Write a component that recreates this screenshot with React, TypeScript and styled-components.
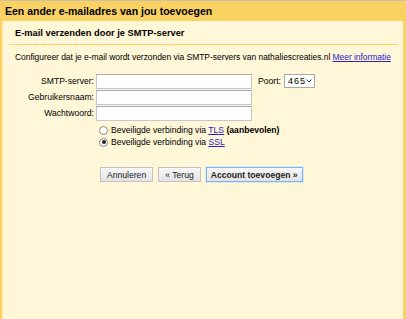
import { createGlobalStyle, styled } from "styled-components";

const GlobalStyle = createGlobalStyle`
  html, body {
    margin: 0;
    padding: 0;
    background: #fff7d7;
  }
  body {
    font-family: "Liberation Sans", Arial, sans-serif;
    color: #000;
  }
`;

const Frame = styled.div`
  width: 406px;
  height: 319px;
  box-sizing: border-box;
  border-top: 1px solid #c9c2a8;
  display: flex;
  flex-direction: column;
  background: #fad163;
`;

const Header = styled.div`
  height: 20px;
  padding-left: 5px;
  display: flex;
  align-items: center;
  font-size: 10.5px;
  font-weight: bold;
`;

const Body = styled.div`
  flex: 1;
  margin: 0 3px 0 2px;
  background: #fff7d7;
  border-left: 1px solid #fde9a8;
  padding: 7px 5px 0 6px;
`;

const SubTitle = styled.div`
  font-size: 9.3px;
  font-weight: bold;
  padding: 0 0 6px 6px;
  border-bottom: 1px solid #fad163;
`;

const Intro = styled.p`
  margin: 7px 0 0 6px;
  font-size: 8.5px;
  letter-spacing: -0.05px;
  white-space: nowrap;
`;

const Link = styled.a`
  color: #2a22c8;
  text-decoration: underline;
`;

const Form = styled.div`
  margin-top: 11px;
  display: grid;
  grid-template-columns: 85px 156px auto;
  grid-auto-rows: 16px;
  column-gap: 2px;
  align-items: center;
  font-size: 8.6px;
`;

const Label = styled.label`
  text-align: right;
`;

const TextInput = styled.input`
  box-sizing: border-box;
  width: 156px;
  height: 15px;
  border: 1px solid #c6c6c6;
  border-top-color: #a9a9a9;
  background: #fff;
  padding: 0 2px;
`;

const PortCell = styled.div`
  display: flex;
  align-items: center;
  gap: 3px;
  padding-left: 4px;
`;

const PortSelect = styled.div`
  box-sizing: border-box;
  width: 31px;
  height: 14px;
  border: 1px solid #a9a9a9;
  background: #fff;
  display: flex;
  align-items: center;
  justify-content: space-between;
  padding: 0 2px 0 3px;
  font-size: 9px;
  letter-spacing: 1px;
`;

const Options = styled.div`
  margin: 4px 0 0 90px;
  display: flex;
  flex-direction: column;
  gap: 2px;
  font-size: 8.6px;
`;

const RadioRow = styled.div`
  display: flex;
  align-items: center;
  gap: 3px;
  height: 10px;
`;

const Radio = styled.span<{ $checked?: boolean }>`
  box-sizing: border-box;
  width: 9px;
  height: 9px;
  border-radius: 50%;
  border: 1px solid #8a8a8a;
  background: #fff;
  display: flex;
  align-items: center;
  justify-content: center;
  &::after {
    content: "";
    width: 4px;
    height: 4px;
    border-radius: 50%;
    background: ${(p) => (p.$checked ? "#222" : "transparent")};
  }
`;

const Buttons = styled.div`
  margin: 20px 0 0 91px;
  display: flex;
  gap: 5px;
`;

const Button = styled.button<{ $primary?: boolean }>`
  box-sizing: border-box;
  height: 15px;
  padding: 0 ${(p) => (p.$primary ? "4px" : "6px")};
  font-family: "Liberation Sans", Arial, sans-serif;
  font-size: 8.6px;
  font-weight: ${(p) => (p.$primary ? "bold" : "normal")};
  color: #222;
  background: linear-gradient(#f8f8f8, #e3e3e3);
  border: 1px solid ${(p) => (p.$primary ? "#7eb4ea" : "#c3c3c3")};
  outline: ${(p) => (p.$primary ? "1px solid #d6e8fa" : "none")};
  cursor: pointer;
`;

export default function App() {
  return (
    <>
      <GlobalStyle />
      <Frame>
        <Header>Een ander e-mailadres van jou toevoegen</Header>
        <Body>
          <SubTitle>E-mail verzenden door je SMTP-server</SubTitle>
          <Intro>
            Configureer dat je e-mail wordt verzonden via SMTP-servers van nathaliescreaties.nl{" "}
            <Link href="#">Meer informatie</Link>
          </Intro>
          <Form>
            <Label>SMTP-server:</Label>
            <TextInput />
            <PortCell>
              Poort:
              <PortSelect>
                465
                <svg width="6" height="4" viewBox="0 0 6 4">
                  <path d="M0.5 0.5 L3 3 L5.5 0.5" fill="none" stroke="#444" strokeWidth="1" />
                </svg>
              </PortSelect>
            </PortCell>
            <Label>Gebruikersnaam:</Label>
            <TextInput />
            <span />
            <Label>Wachtwoord:</Label>
            <TextInput type="password" />
            <span />
          </Form>
          <Options>
            <RadioRow>
              <Radio />
              <span>
                Beveiligde verbinding via <Link href="#">TLS</Link> <b>(aanbevolen)</b>
              </span>
            </RadioRow>
            <RadioRow>
              <Radio $checked />
              <span>
                Beveiligde verbinding via <Link href="#">SSL</Link>
              </span>
            </RadioRow>
          </Options>
          <Buttons>
            <Button>Annuleren</Button>
            <Button>« Terug</Button>
            <Button $primary>Account toevoegen »</Button>
          </Buttons>
        </Body>
      </Frame>
    </>
  );
}
